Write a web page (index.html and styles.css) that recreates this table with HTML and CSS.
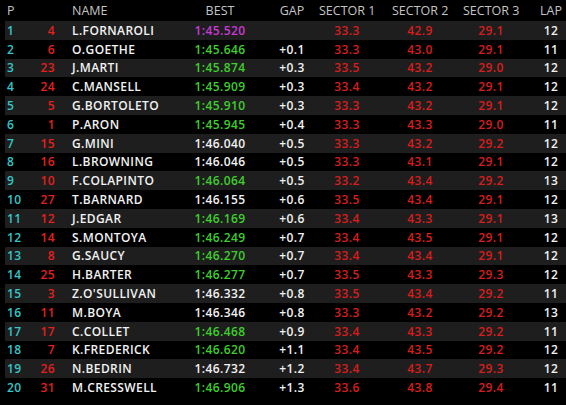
FILE: index.html
```html
<!DOCTYPE html>
<html lang="en">
  <head>
    <meta charset="UTF-8" />
    <meta name="viewport" content="width=device-width, initial-scale=1.0" />
    <title>Timing</title>
    <link rel="stylesheet" href="styles.css">
  </head>
  <body>
    <div class="timing">
      <div class="row head">
        <div class="pos">P</div>
        <div class="no"></div>
        <div class="name">NAME</div>
        <div class="best">BEST</div>
        <div class="gap">GAP</div>
        <div class="s1">SECTOR 1</div>
        <div class="s2">SECTOR 2</div>
        <div class="s3">SECTOR 3</div>
        <div class="lap">LAP</div>
      </div>
      <div class="row"><div class="pos">1</div><div class="no">4</div><div class="name">L.FORNAROLI</div><div class="best purple">1:45.520</div><div class="gap"></div><div class="s1">33.3</div><div class="s2">42.9</div><div class="s3">29.1</div><div class="lap">12</div></div>
      <div class="row"><div class="pos">2</div><div class="no">6</div><div class="name">O.GOETHE</div><div class="best green">1:45.646</div><div class="gap">+0.1</div><div class="s1">33.3</div><div class="s2">43.0</div><div class="s3">29.1</div><div class="lap">11</div></div>
      <div class="row"><div class="pos">3</div><div class="no">23</div><div class="name">J.MARTI</div><div class="best green">1:45.874</div><div class="gap">+0.3</div><div class="s1">33.5</div><div class="s2">43.2</div><div class="s3">29.0</div><div class="lap">12</div></div>
      <div class="row"><div class="pos">4</div><div class="no">24</div><div class="name">C.MANSELL</div><div class="best green">1:45.909</div><div class="gap">+0.3</div><div class="s1">33.4</div><div class="s2">43.2</div><div class="s3">29.1</div><div class="lap">12</div></div>
      <div class="row"><div class="pos">5</div><div class="no">5</div><div class="name">G.BORTOLETO</div><div class="best green">1:45.910</div><div class="gap">+0.3</div><div class="s1">33.3</div><div class="s2">43.2</div><div class="s3">29.1</div><div class="lap">12</div></div>
      <div class="row"><div class="pos">6</div><div class="no">1</div><div class="name">P.ARON</div><div class="best green">1:45.945</div><div class="gap">+0.4</div><div class="s1">33.3</div><div class="s2">43.3</div><div class="s3">29.0</div><div class="lap">11</div></div>
      <div class="row"><div class="pos">7</div><div class="no">15</div><div class="name">G.MINI</div><div class="best">1:46.040</div><div class="gap">+0.5</div><div class="s1">33.3</div><div class="s2">43.2</div><div class="s3">29.2</div><div class="lap">12</div></div>
      <div class="row"><div class="pos">8</div><div class="no">16</div><div class="name">L.BROWNING</div><div class="best">1:46.046</div><div class="gap">+0.5</div><div class="s1">33.3</div><div class="s2">43.1</div><div class="s3">29.1</div><div class="lap">12</div></div>
      <div class="row"><div class="pos">9</div><div class="no">10</div><div class="name">F.COLAPINTO</div><div class="best green">1:46.064</div><div class="gap">+0.5</div><div class="s1">33.2</div><div class="s2">43.4</div><div class="s3">29.2</div><div class="lap">13</div></div>
      <div class="row"><div class="pos">10</div><div class="no">27</div><div class="name">T.BARNARD</div><div class="best">1:46.155</div><div class="gap">+0.6</div><div class="s1">33.5</div><div class="s2">43.4</div><div class="s3">29.1</div><div class="lap">12</div></div>
      <div class="row"><div class="pos">11</div><div class="no">12</div><div class="name">J.EDGAR</div><div class="best green">1:46.169</div><div class="gap">+0.6</div><div class="s1">33.4</div><div class="s2">43.3</div><div class="s3">29.1</div><div class="lap">13</div></div>
      <div class="row"><div class="pos">12</div><div class="no">14</div><div class="name">S.MONTOYA</div><div class="best green">1:46.249</div><div class="gap">+0.7</div><div class="s1">33.4</div><div class="s2">43.5</div><div class="s3">29.1</div><div class="lap">12</div></div>
      <div class="row"><div class="pos">13</div><div class="no">8</div><div class="name">G.SAUCY</div><div class="best green">1:46.270</div><div class="gap">+0.7</div><div class="s1">33.4</div><div class="s2">43.4</div><div class="s3">29.1</div><div class="lap">12</div></div>
      <div class="row"><div class="pos">14</div><div class="no">25</div><div class="name">H.BARTER</div><div class="best green">1:46.277</div><div class="gap">+0.7</div><div class="s1">33.5</div><div class="s2">43.3</div><div class="s3">29.3</div><div class="lap">12</div></div>
      <div class="row"><div class="pos">15</div><div class="no">3</div><div class="name">Z.O'SULLIVAN</div><div class="best">1:46.332</div><div class="gap">+0.8</div><div class="s1">33.5</div><div class="s2">43.4</div><div class="s3">29.2</div><div class="lap">11</div></div>
      <div class="row"><div class="pos">16</div><div class="no">11</div><div class="name">M.BOYA</div><div class="best">1:46.346</div><div class="gap">+0.8</div><div class="s1">33.3</div><div class="s2">43.2</div><div class="s3">29.2</div><div class="lap">13</div></div>
      <div class="row"><div class="pos">17</div><div class="no">17</div><div class="name">C.COLLET</div><div class="best green">1:46.468</div><div class="gap">+0.9</div><div class="s1">33.4</div><div class="s2">43.3</div><div class="s3">29.2</div><div class="lap">11</div></div>
      <div class="row"><div class="pos">18</div><div class="no">7</div><div class="name">K.FREDERICK</div><div class="best green">1:46.620</div><div class="gap">+1.1</div><div class="s1">33.4</div><div class="s2">43.5</div><div class="s3">29.2</div><div class="lap">12</div></div>
      <div class="row"><div class="pos">19</div><div class="no">26</div><div class="name">N.BEDRIN</div><div class="best">1:46.732</div><div class="gap">+1.2</div><div class="s1">33.4</div><div class="s2">43.7</div><div class="s3">29.3</div><div class="lap">12</div></div>
      <div class="row"><div class="pos">20</div><div class="no">31</div><div class="name">M.CRESSWELL</div><div class="best green">1:46.906</div><div class="gap">+1.3</div><div class="s1">33.6</div><div class="s2">43.8</div><div class="s3">29.4</div><div class="lap">11</div></div>
    </div>
  </body>
</html>
```

FILE: styles.css
```css
body {
  margin: 0;
  padding: 0;
  background: #000;
  font-family: "Open Sans", "Noto Sans", sans-serif;
  font-size: 12px;
  font-weight: 600;
  letter-spacing: 0.4px;
  color: #f2f2f2;
}

.timing {
  width: 561px;
  margin-left: 5px;
}

.row {
  display: flex;
  align-items: center;
  height: 18.8px;
  white-space: nowrap;
}

.row > div {
  box-sizing: border-box;
}

.row:nth-child(even) {
  background: #1e1e1e;
}

.head {
  height: 21px;
  font-size: 12.5px;
  font-weight: 400;
  color: #c4c4c4;
  letter-spacing: 0;
}

.pos {
  width: 30px;
  padding-left: 2px;
  color: #35c6c8;
}

.no {
  width: 22px;
  padding-right: 2px;
  text-align: right;
  color: #e3201e;
}

.name {
  width: 133px;
  padding-left: 15px;
}

.best {
  width: 60px;
  text-align: center;
}

.gap {
  width: 50px;
  margin-left: 17px;
  text-align: center;
}

.s1,
.s2,
.s3 {
  width: 56px;
  text-align: center;
  color: #d81d1d;
}

.s1 {
  margin-left: 2px;
}

.s2 {
  margin-left: 17px;
}

.s3 {
  margin-left: 15px;
}

.lap {
  width: 30px;
  margin-left: 17px;
  text-align: center;
}

.head .pos,
.head .name,
.head .s1,
.head .s2,
.head .s3 {
  color: #c4c4c4;
}

.green {
  color: #3fcf2c;
}

.purple {
  color: #c93ad4;
}
```
